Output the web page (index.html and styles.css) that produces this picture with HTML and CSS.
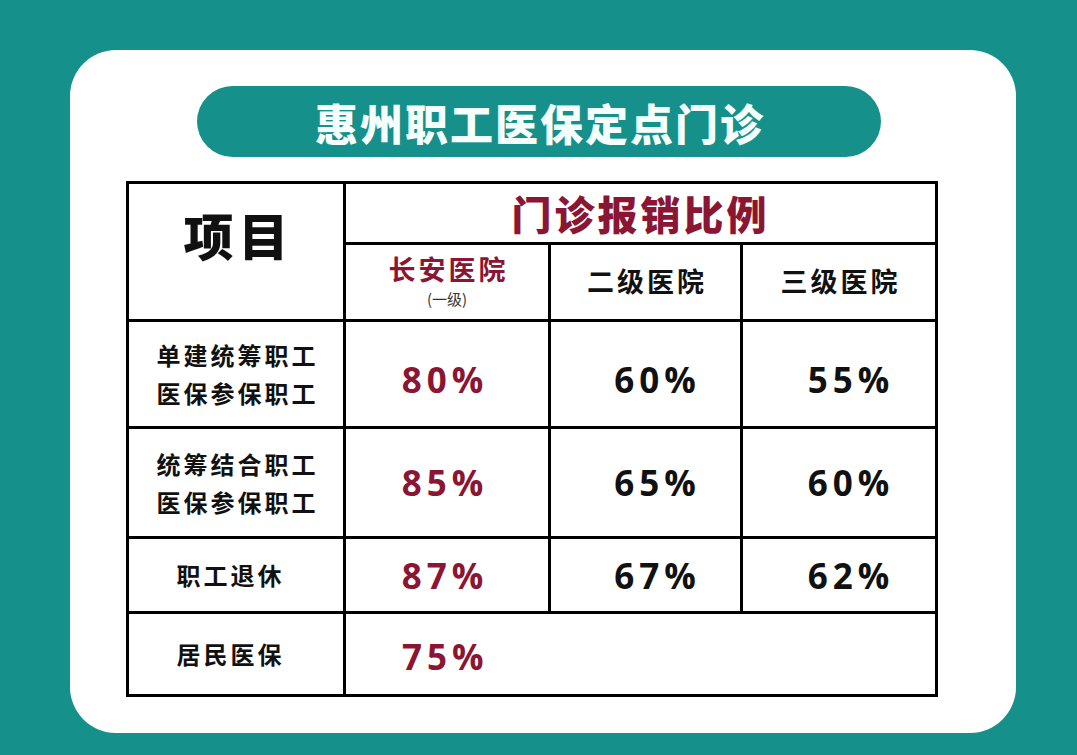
FILE: index.html
```html
<!DOCTYPE html>
<html lang="zh-CN">
<head>
<meta charset="utf-8">
<title>惠州职工医保定点门诊</title>
<link rel="stylesheet" href="styles.css">
</head>
<body>
<div class="card">
  <div class="pill">惠州职工医保定点门诊</div>
  <div class="table">
    <div class="cell item">项目</div>
    <div class="cell head-red">门诊报销比例</div>
    <div class="cell sub sub-red"><span class="sub-name">长安医院</span><span class="sub-note">(一级)</span></div>
    <div class="cell sub"><span class="sub-name">二级医院</span></div>
    <div class="cell sub"><span class="sub-name">三级医院</span></div>

    <div class="cell label">单建统筹职工<br>医保参保职工</div>
    <div class="cell pct red first">80%</div>
    <div class="cell pct shift first">60%</div>
    <div class="cell pct shift first">55%</div>

    <div class="cell label">统筹结合职工<br>医保参保职工</div>
    <div class="cell pct red">85%</div>
    <div class="cell pct shift">65%</div>
    <div class="cell pct shift">60%</div>

    <div class="cell label short">职工退休</div>
    <div class="cell pct red">87%</div>
    <div class="cell pct shift">67%</div>
    <div class="cell pct shift">62%</div>

    <div class="cell label short">居民医保</div>
    <div class="cell pct red wide">75%</div>
  </div>
</div>
</body>
</html>
```

FILE: styles.css
```css
html, body {
  margin: 0;
  padding: 0;
}
body {
  background: #16908a;
  width: 1077px;
  height: 755px;
  overflow: hidden;
  padding: 50px 0 0 70px;
  box-sizing: border-box;
  font-family: "Noto Sans CJK SC", "Noto Sans", sans-serif;
}
.card {
  width: 946px;
  height: 683px;
  background: #ffffff;
  border-radius: 46px;
  box-sizing: border-box;
  padding-top: 36px;
  display: flex;
  flex-direction: column;
  align-items: flex-start;
}
.pill {
  margin-left: 127px;
  width: 684px;
  height: 71px;
  border-radius: 36px;
  background: #16908a;
  color: #f4fffe;
  font-size: 43px;
  font-weight: 900;
  letter-spacing: 2px;
  display: flex;
  align-items: center;
  justify-content: center;
  padding-left: 2px;
  box-sizing: border-box;
}
.table {
  margin-top: 24px;
  margin-left: 56px;
  display: grid;
  grid-template-columns: 214px 202px 189px 192px;
  grid-template-rows: 58px 74px 104px 107px 72px 80px;
  gap: 3px;
  padding: 3px;
  background: #000;
}
.cell {
  background: #fff;
  display: flex;
  align-items: center;
  justify-content: center;
  text-align: center;
}
.item {
  grid-row: 1 / span 2;
  font-size: 50px;
  font-weight: 900;
  letter-spacing: 5px;
  color: #111;
  padding-left: 5px;
  padding-bottom: 36px;
}
.head-red {
  grid-column: 2 / span 3;
  font-size: 40px;
  font-weight: 900;
  letter-spacing: 3px;
  color: #8b1633;
  padding-top: 0;
}
.sub {
  flex-direction: column;
  padding-bottom: 2px;
}
.sub-name {
  font-size: 27px;
  font-weight: 700;
  letter-spacing: 3px;
  color: #111;
  line-height: 32px;
  padding-left: 3px;
}
.sub-red {
  justify-content: flex-start;
  padding-top: 8px;
  padding-bottom: 0;
}
.sub-red .sub-name {
  color: #8b1633;
}
.sub-note {
  font-size: 15px;
  color: #333;
  line-height: 20px;
  margin-top: 4px;
}
.label {
  font-size: 24px;
  font-weight: 700;
  letter-spacing: 3px;
  line-height: 38px;
  color: #111;
  padding-left: 3px;
}
.label.short {
  padding-right: 14px;
}
.pct {
  font-family: "Open Sans", "Noto Sans", sans-serif;
  font-size: 35px;
  font-weight: 700;
  letter-spacing: 5px;
  color: #111;
}
.pct.first {
  padding-top: 10px;
}
.pct.red {
  color: #8b1633;
  padding-right: 4px;
}
.pct.shift {
  padding-left: 24px;
}
.pct.wide {
  grid-column: 2 / span 3;
  justify-content: flex-start;
  padding-left: 56px;
  padding-right: 0;
  padding-top: 4px;
}
```
